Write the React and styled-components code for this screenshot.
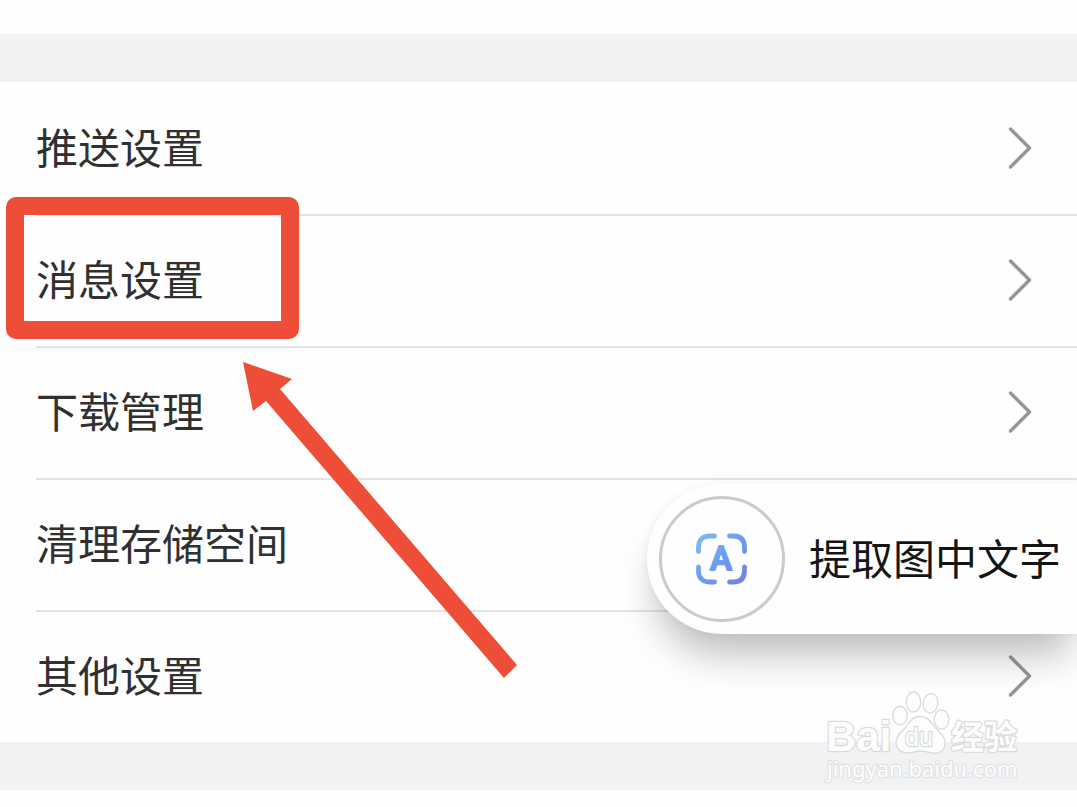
import React from 'react'

import styled, { createGlobalStyle } from 'styled-components'

const items = [
    { id: 'push', label: '推送设置' },
    { id: 'message', label: '消息设置', marked: true },
    { id: 'download', label: '下载管理' },
    { id: 'storage', label: '清理存储空间' },
    { id: 'other', label: '其他设置' },
]

const Chevron = () => (
    <svg width="26" height="44" viewBox="0 0 26 44" fill="none" aria-hidden="true">
        <path d="M3.5 3 L22.5 22 L3.5 41" stroke="#969696" strokeWidth="3.4" strokeLinecap="round" strokeLinejoin="round" />
    </svg>
)

const ScanIcon = () => (
    <svg width="52" height="52" viewBox="0 0 52 52" fill="none" aria-hidden="true">
        <defs>
            <linearGradient id="scan" gradientUnits="userSpaceOnUse" x1="2" y1="2" x2="50" y2="50">
                <stop offset="0" stopColor="#7cbcf3" />
                <stop offset="0.5" stopColor="#6c9df0" />
                <stop offset="1" stopColor="#7482dc" />
            </linearGradient>
        </defs>
        <g stroke="url(#scan)" strokeWidth="4.8" strokeLinecap="round">
            <path d="M2.5 18.5 V14.5 Q2.5 3 14 3 H18.5" />
            <path d="M33.5 3 H37.5 Q48.5 3 48.5 14.5 V18.5" />
            <path d="M48.5 34 V37.5 Q48.5 49 37.5 49 H33.5" />
            <path d="M18.5 49 H14 Q2.5 49 2.5 37.5 V34" />
        </g>
        <IconLetter x="25" y="37" textAnchor="middle" fill="url(#scan)" stroke="url(#scan)">A</IconLetter>
    </svg>
)

const Arrow = () => (
    <ArrowSvg width="276" height="320" viewBox="0 0 276 320" aria-hidden="true">
        <polygon points="1,1 50,18 38,28 275,304 262,317 24,40 11,50" fill="#ee4d38" />
    </ArrowSvg>
)

const Watermark = () => (
    <WatermarkSvg width="200" height="100" viewBox="0 0 200 100">
        <g fill="#fdfdfd" stroke="#dadada" strokeWidth="2.4" strokeLinejoin="round">
            <Brand x="2" y="63">Bai</Brand>
            <g strokeWidth="1.3">
                <ellipse cx="76" cy="27.5" rx="7.3" ry="9.4" />
                <ellipse cx="89.5" cy="14" rx="7.2" ry="10" />
                <ellipse cx="106.5" cy="15.3" rx="7.4" ry="9.8" transform="rotate(8 106.5 15.3)" />
                <ellipse cx="117.5" cy="31.5" rx="7.3" ry="9.6" />
                <path d="M96 28.5 C104 28.5 107 34 111 39 C116 45 121 48 121 55 C121 63 115 66 108 65 C103 64 100 63 96 63 C92 63 89 65 84 65 C76 65 72 60 72 54 C72 47 78 44 82 39 C86 33 89 28.5 96 28.5 Z" />
            </g>
            <Du x="81" y="58">du</Du>
            <BrandCn x="127" y="61">经验</BrandCn>
            <Domain x="3" y="89">jingyan.baidu.com</Domain>
        </g>
    </WatermarkSvg>
)

const App = () => {
    return (
        <Page>
            <GlobalStyle />
            <Band />
            <List>
                {items.map((item) => (
                    <Item key={item.id}>
                        <ItemButton type="button">
                            <Label>{item.label}</Label>
                            <Chevron />
                        </ItemButton>
                        {item.marked && <Marker />}
                    </Item>
                ))}
            </List>
            <Band />
            <Arrow />
            <ExtractButton type="button">
                <Circle>
                    <ScanIcon />
                </Circle>
                <Label>提取图中文字</Label>
            </ExtractButton>
            <Watermark />
        </Page>
    )
}

export default App

const GlobalStyle = createGlobalStyle`
    * {
        box-sizing: border-box;
    }
    body {
        margin: 0;
        background-color: #fefefe;
        font-family: 'Noto Sans CJK SC', sans-serif;
    }
`
const Page = styled.main`
    position: relative;
    min-height: 100vh;
    padding-top: 34px;
    overflow: hidden;
`
const Band = styled.div`
    height: 48px;
    background-color: #f1f2f4;
`
const List = styled.ul`
    margin: 0;
    padding: 0 0 0 36px;
    list-style: none;
`
const Item = styled.li`
    position: relative;
    & + & {
        box-shadow: inset 0 2px #e3e3e4;
    }
`
const ItemButton = styled.button`
    display: flex;
    flex-direction: row;
    justify-content: space-between;
    align-items: center;
    width: 100%;
    height: 132px;
    padding: 0 44px 0 0;
    border: none;
    background: none;
    color: #303030;
    cursor: pointer;
`
const Label = styled.span`
    padding-bottom: 4px;
    font-family: 'Noto Sans CJK SC', sans-serif;
    font-size: 42px;
    line-height: 60px;
    white-space: nowrap;
`
/* hand drawn frame round the highlighted row */
const Marker = styled.div`
    position: absolute;
    top: -17px;
    left: -30px;
    width: 293px;
    height: 142px;
    border: 18px solid #ee4d38;
    border-radius: 10px;
    pointer-events: none;
`
const ArrowSvg = styled.svg`
    position: absolute;
    top: 361px;
    left: 242px;
    pointer-events: none;
`
const ExtractButton = styled.button`
    position: absolute;
    top: 484px;
    right: 0;
    display: flex;
    flex-direction: row;
    align-items: center;
    gap: 24px;
    padding: 12px 16px 12px 12px;
    border: none;
    border-radius: 75px 0 0 75px;
    background-color: #fefefe;
    box-shadow: 0 30px 36px -8px rgba(0, 0, 0, 0.24), 0 0 10px rgba(0, 0, 0, 0.05);
    color: #151515;
    cursor: pointer;
`
const Circle = styled.span`
    display: flex;
    justify-content: center;
    align-items: center;
    width: 126px;
    height: 126px;
    border: 3px solid #cbcbcb;
    border-radius: 50%;
`
const IconLetter = styled.text`
    font-family: Roboto, sans-serif;
    font-size: 33px;
    font-weight: 500;
    stroke-width: 2px;
    stroke-linejoin: round;
`
const WatermarkSvg = styled.svg`
    position: absolute;
    top: 688px;
    right: 53px;
    pointer-events: none;
    text {
        paint-order: stroke;
    }
`
const Brand = styled.text`
    font-family: 'Liberation Sans', sans-serif;
    font-size: 42px;
    font-weight: 700;
`
const Du = styled.text`
    font-family: 'Liberation Sans', sans-serif;
    font-size: 25px;
`
const BrandCn = styled.text`
    font-family: 'Noto Sans CJK SC', sans-serif;
    font-size: 33px;
    font-weight: 700;
`
const Domain = styled.text`
    font-family: 'Noto Sans', sans-serif;
    font-size: 22px;
    stroke: #e2e2e2;
`
